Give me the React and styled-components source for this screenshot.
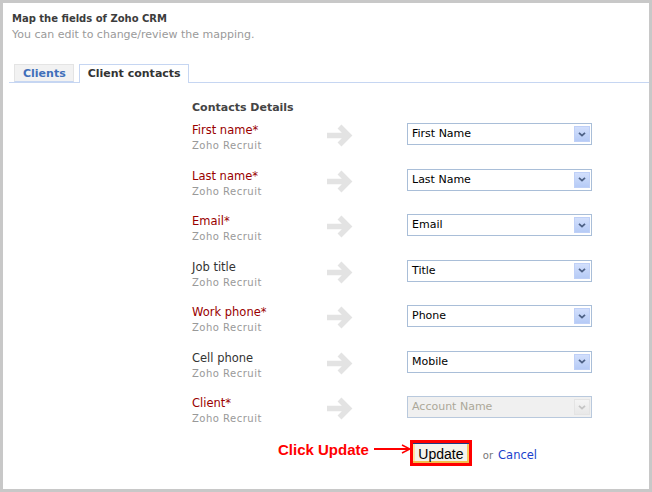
import styled, { createGlobalStyle } from "styled-components";

const GlobalStyle = createGlobalStyle`
  body {
    margin: 0;
    background: #ffffff;
    font-family: "DejaVu Sans", Verdana, sans-serif;
  }
`;

const Frame = styled.div`
  width: 652px;
  height: 492px;
  box-sizing: border-box;
  border: 3px solid #c8c8c8;
  padding: 0 0 0 6px;
  background: #fff;
  overflow: hidden;
`;

const Header = styled.div`
  padding: 9px 0 0 3px;
`;

const Title = styled.div`
  font-size: 10px;
  font-weight: bold;
  line-height: 14px;
  color: #3c3c3c;
`;

const Subtitle = styled.div`
  font-size: 11px;
  line-height: 15px;
  color: #9a9a9a;
  margin-top: 1px;
`;

const TabBar = styled.div`
  display: flex;
  align-items: flex-end;
  gap: 5px;
  margin-top: 22px;
  padding-left: 5px;
  border-bottom: 1px solid #c6d6f2;
  height: 18px;
`;

const Tab = styled.div`
  box-sizing: border-box;
  height: ${({ $active }) => ($active ? "19px" : "18px")};
  margin-bottom: ${({ $active }) => ($active ? "-1px" : "0")};
  padding: 0 7px 0 8px;
  font-size: 11px;
  font-weight: bold;
  line-height: 17px;
  color: ${({ $active }) => ($active ? "#333333" : "#3f6fba")};
  background: ${({ $active }) => ($active ? "#ffffff" : "#f2f2f2")};
  border: 1px solid ${({ $active }) => ($active ? "#c6d6f2" : "#e4e4e4")};
  border-bottom: ${({ $active }) => ($active ? "none" : "1px solid #c6d6f2")};
`;

const Form = styled.div`
  margin-left: 183px;
  padding-top: 18px;
`;

const SectionTitle = styled.div`
  font-size: 11px;
  font-weight: bold;
  line-height: 14px;
  color: #444444;
  margin-bottom: 8px;
`;

const Rows = styled.div`
  display: flex;
  flex-direction: column;
  gap: 15.5px;
`;

const Row = styled.div`
  display: grid;
  grid-template-columns: 135px 80px 185px;
  align-items: start;
  height: 30px;
`;

const Label = styled.div`
  font-size: 11.5px;
  line-height: 15px;
  color: ${({ $required }) => ($required ? "#990000" : "#333333")};
  white-space: nowrap;
`;

const Source = styled.div`
  font-size: 10px;
  line-height: 15px;
  letter-spacing: 0.5px;
  color: #999999;
`;

const ArrowIcon = styled.svg`
  display: block;
  margin-top: 1px;
`;

const Select = styled.div`
  box-sizing: border-box;
  display: flex;
  align-items: center;
  justify-content: space-between;
  height: 22px;
  padding: 0 1px 1px 4px;
  border: 1px solid ${({ $disabled }) => ($disabled ? "#b9c9dd" : "#a9bed8")};
  background: ${({ $disabled }) => ($disabled ? "#f0f0f0" : "#ffffff")};
  font-size: 11px;
  color: ${({ $disabled }) => ($disabled ? "#aca899" : "#000000")};
`;

const DropButton = styled.div`
  box-sizing: border-box;
  width: 16px;
  height: 16px;
  margin-top: 1px;
  display: flex;
  align-items: center;
  justify-content: center;
  border: 1px solid ${({ $disabled }) => ($disabled ? "#e4e4e4" : "#bfd0f7")};
  background: ${({ $disabled }) =>
    $disabled
      ? "linear-gradient(#f4f4f4, #e8e8e8)"
      : "linear-gradient(#d2dffc, #b6cbf6)"};
`;

const Actions = styled.div`
  display: flex;
  align-items: center;
  margin-top: 14px;
  padding-left: 86px;
  height: 26px;
`;

const Callout = styled.div`
  display: flex;
  align-items: center;
  gap: 5px;
  margin-bottom: 8px;
`;

const CalloutText = styled.span`
  font-family: "Liberation Sans", Arial, sans-serif;
  font-size: 15px;
  font-weight: bold;
  color: #ff0000;
`;

const Highlight = styled.div`
  box-sizing: border-box;
  width: 62px;
  height: 26px;
  margin-left: -1px;
  border: 3px solid #ff0000;
  display: flex;
`;

const UpdateButton = styled.button`
  flex: 1;
  margin: 0;
  padding: 0;
  border: none;
  border-top: 1px solid #1c3a84;
  background: #f4f3ec;
  box-shadow: inset 0 -2px 0 #f3c04f, inset 2px 0 0 #fbe4a2, inset -2px 0 0 #f5c95e;
  font-family: "Liberation Sans", Arial, sans-serif;
  font-size: 14px;
  color: #000;
  line-height: 18px;
`;

const Or = styled.span`
  margin: 4px 0 0 11px;
  font-size: 10px;
  color: #777777;
`;

const CancelLink = styled.a`
  margin: 4px 0 0 5px;
  font-size: 11.5px;
  color: #1a3fcc;
  text-decoration: none;
`;

const fields = [
  { label: "First name*", required: true, value: "First Name" },
  { label: "Last name*", required: true, value: "Last Name" },
  { label: "Email*", required: true, value: "Email" },
  { label: "Job title", required: false, value: "Title" },
  { label: "Work phone*", required: true, value: "Phone" },
  { label: "Cell phone", required: false, value: "Mobile" },
  { label: "Client*", required: true, value: "Account Name", disabled: true },
];

const Arrow = () => (
  <ArrowIcon width="27" height="23" viewBox="0 0 27 23">
    <path
      d="M0 11.5 H21 M12.5 2.5 L21.5 11.5 L12.5 20.5"
      fill="none"
      stroke="#e3e3e3"
      strokeWidth="5.5"
    />
  </ArrowIcon>
);

const Chevron = ({ disabled }) => (
  <svg width="8" height="5" viewBox="0 0 8 5">
    <path
      d="M1 0.8 L4 3.6 L7 0.8"
      fill="none"
      stroke={disabled ? "#c4c4c4" : "#4d6185"}
      strokeWidth="1.8"
    />
  </svg>
);

const App = () => {
  return (
    <>
      <GlobalStyle />
      <Frame>
        <Header>
          <Title>Map the fields of Zoho CRM</Title>
          <Subtitle>You can edit to change/review the mapping.</Subtitle>
        </Header>
        <TabBar>
          <Tab>Clients</Tab>
          <Tab $active>Client contacts</Tab>
        </TabBar>
        <Form>
          <SectionTitle>Contacts Details</SectionTitle>
          <Rows>
            {fields.map((f) => (
              <Row key={f.label}>
                <div>
                  <Label $required={f.required}>{f.label}</Label>
                  <Source>Zoho Recruit</Source>
                </div>
                <Arrow />
                <Select $disabled={f.disabled}>
                  <span>{f.value}</span>
                  <DropButton $disabled={f.disabled}>
                    <Chevron disabled={f.disabled} />
                  </DropButton>
                </Select>
              </Row>
            ))}
          </Rows>
          <Actions>
            <Callout>
              <CalloutText>Click Update</CalloutText>
              <svg width="37" height="10" viewBox="0 0 37 10">
                <path d="M0 5 H35" stroke="#ff0000" strokeWidth="2" />
                <path d="M28 1 L36 5 L28 9" fill="none" stroke="#ff0000" strokeWidth="1.5" />
              </svg>
            </Callout>
            <Highlight>
              <UpdateButton>Update</UpdateButton>
            </Highlight>
            <Or>or</Or>
            <CancelLink href="#">Cancel</CancelLink>
          </Actions>
        </Form>
      </Frame>
    </>
  );
};

export default App;
